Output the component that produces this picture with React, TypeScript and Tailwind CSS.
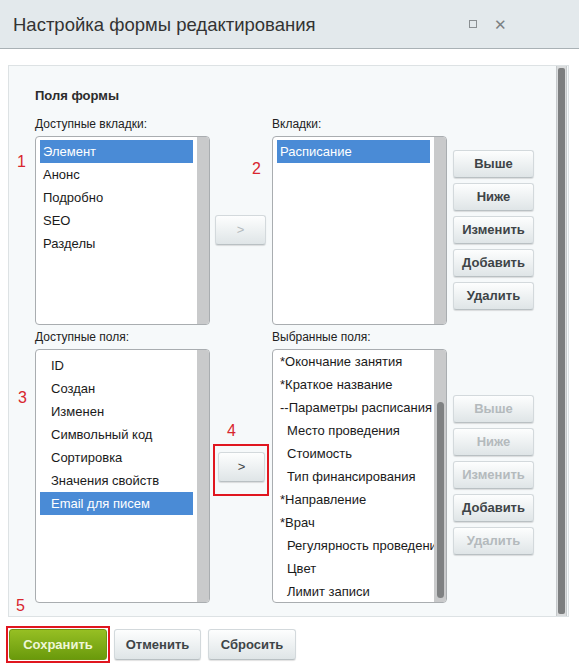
import React from "react";

const tabsAvail = ["Элемент", "Анонс", "Подробно", "SEO", "Разделы"];
const fieldsAvail = ["ID", "Создан", "Изменен", "Символьный код", "Сортировка", "Значения свойств", "Email для писем"];
const fieldsChosen: [string, boolean][] = [
  ["*Окончание занятия", false],
  ["*Краткое название", false],
  ["--Параметры расписания", false],
  ["Место проведения", true],
  ["Стоимость", true],
  ["Тип финансирования", true],
  ["*Направление", false],
  ["*Врач", false],
  ["Регулярность проведения", true],
  ["Цвет", true],
  ["Лимит записи", true],
];

function Btn({ label, disabled, className = "" }: { label: string; disabled?: boolean; className?: string }) {
  return (
    <div
      className={
        "flex items-center justify-center rounded-[3px] border border-[#d3d9dc] border-b-[#b9c0c3] bg-gradient-to-b from-[#fdfefe] to-[#dfe5e7] shadow-[0_1px_1px_rgba(0,0,0,0.12)] text-[13px] font-bold " +
        (disabled ? "text-[#b4babd] " : "text-[#3e4447] ") +
        className
      }
    >
      {label}
    </div>
  );
}

function Num({ n, className = "" }: { n: string; className?: string }) {
  return <div className={"text-[16px] text-[#d8262e] leading-none h-[16px] " + className}>{n}</div>;
}

function ListBox({ children, h, thumb, pt = "pt-[3px]" }: { children: React.ReactNode; h: string; thumb?: boolean; pt?: string }) {
  return (
    <div className={"flex w-[175px] rounded-[4px] border border-[#a9adb0] bg-white overflow-hidden " + h}>
      <div className={"flex-1 min-w-0 overflow-hidden pl-[4px] pr-[4px] " + pt}>{children}</div>
      <div className="w-[12px] shrink-0 bg-[#c9cacb] flex flex-col pt-[52px] pb-[4px] items-center">
        {thumb && <div className="w-[7px] flex-1 rounded-full bg-[#7f8182]" />}
      </div>
    </div>
  );
}

function Item({ label, selected, indent }: { label: string; selected?: boolean; indent?: string }) {
  return (
    <div
      className={
        "h-[23px] flex items-center whitespace-nowrap text-[13px] " +
        (selected ? "bg-[#4a8bd6] text-white " : "text-[#1a1a1a] ") +
        (indent ?? "pl-[3px]")
      }
    >
      {label}
    </div>
  );
}

export default function App() {
  return (
    <div className="w-[579px] h-[671px] bg-white flex flex-col font-['Liberation_Sans',Arial,sans-serif] overflow-hidden">
      <div className="h-[49px] shrink-0 bg-[#e3e9ec] border-b border-[#a9b1b5] flex items-center pl-[13px] pr-[72px] justify-between">
        <div className="text-[18.5px] text-[#333] pt-[1px]">Настройка формы редактирования</div>
        <div className="flex items-center gap-[17px] text-[#7b8083]">
          <div className="w-[8px] h-[8px] border border-[#8a8f92]" />
          <div className="text-[15px] leading-none">✕</div>
        </div>
      </div>

      <div className="mt-[16px] ml-[8px] w-[561px] h-[552px] border border-[#dde2e4] bg-[#f6f9fa] flex">
        <div className="flex-1 flex">
          <div className="w-[26px] flex flex-col">
            <Num n="1" className="mt-[88px] ml-[8px]" />
            <Num n="3" className="mt-[220px] ml-[9px]" />
            <Num n="5" className="mt-[192px] ml-[7px]" />
          </div>
          <div className="flex flex-col">
            <div className="text-[13px] font-bold text-[#2c2c2c] mt-[22px] h-[16px] leading-[16px]">Поля формы</div>
            <div className="text-[12px] text-[#222] mt-[12px] h-[16px] leading-[16px]">Доступные вкладки:</div>
            <div className="mt-[4px]">
              <ListBox h="h-[189px]">
                {tabsAvail.map((t, i) => (
                  <Item key={t} label={t} selected={i === 0} />
                ))}
              </ListBox>
            </div>
            <div className="text-[12px] text-[#222] mt-[4px] h-[16px] leading-[16px]">Доступные поля:</div>
            <div className="mt-[4px]">
              <ListBox h="h-[254px]" pt="pt-[4px]">
                {fieldsAvail.map((t, i) => (
                  <Item key={t} label={t} selected={i === fieldsAvail.length - 1} indent="pl-[11px]" />
                ))}
              </ListBox>
            </div>
          </div>

          <div className="w-[62px] flex flex-col">
            <Num n="2" className="mt-[95px] ml-[42px]" />
            <div className="mt-[38px] ml-[5px]">
              <Btn label=">" disabled className="w-[51px] h-[30px] font-normal text-[12px]" />
            </div>
            <div className="mt-[178px] flex flex-col">
              <Num n="4" className="ml-[17px]" />
              <div className="mt-[5px] ml-[3px] w-[56px] h-[52px] border-[2px] border-[#e0161f] flex flex-col items-start pt-[6px] pl-[3px]">
                <Btn label=">" className="w-[47px] h-[30px] font-normal text-[12px]" />
              </div>
            </div>
          </div>

          <div className="flex flex-col">
            <div className="text-[12px] text-[#222] mt-[50px] h-[16px] leading-[16px]">Вкладки:</div>
            <div className="mt-[4px]">
              <ListBox h="h-[189px]">
                <Item label="Расписание" selected />
              </ListBox>
            </div>
            <div className="text-[12px] text-[#222] mt-[4px] h-[16px] leading-[16px]">Выбранные поля:</div>
            <div className="mt-[4px]">
              <ListBox h="h-[254px]" pt="pt-0" thumb>
                {fieldsChosen.map(([t, ind]) => (
                  <Item key={t} label={t} indent={ind ? "pl-[10px]" : "pl-[3px]"} />
                ))}
              </ListBox>
            </div>
          </div>

          <div className="flex flex-col ml-[6px]">
            <div className="mt-[84px] flex flex-col gap-[5px]">
              <Btn label="Выше" className="w-[81px] h-[28px]" />
              <Btn label="Ниже" className="w-[81px] h-[28px]" />
              <Btn label="Изменить" className="w-[81px] h-[28px]" />
              <Btn label="Добавить" className="w-[81px] h-[28px]" />
              <Btn label="Удалить" className="w-[81px] h-[28px]" />
            </div>
            <div className="mt-[85px] flex flex-col gap-[5px]">
              <Btn label="Выше" disabled className="w-[81px] h-[28px]" />
              <Btn label="Ниже" disabled className="w-[81px] h-[28px]" />
              <Btn label="Изменить" disabled className="w-[81px] h-[28px]" />
              <Btn label="Добавить" className="w-[81px] h-[28px]" />
              <Btn label="Удалить" disabled className="w-[81px] h-[28px]" />
            </div>
          </div>
        </div>
        <div className="w-[11px] mr-[1px] border-x border-[#c5c9cb] bg-[#dadcdd] flex flex-col items-center py-[2px]">
          <div className="w-[7px] flex-1 rounded-[2px] bg-[#7c7e7f]" />
        </div>
      </div>

      <div className="mt-[9px] ml-[6px] flex items-center">
        <div className="border-[2px] border-[#e0161f] p-[1px]">
          <div className="w-[98px] h-[31px] rounded-[3px] bg-gradient-to-b from-[#96bf23] to-[#6a9a0b] border border-[#6f9610] flex items-center justify-center text-[13px] font-bold text-[#eef6d6]">
            Сохранить
          </div>
        </div>
        <Btn label="Отменить" className="ml-[4px] w-[87px] h-[31px]" />
        <Btn label="Сбросить" className="ml-[7px] w-[88px] h-[31px]" />
      </div>
    </div>
  );
}
